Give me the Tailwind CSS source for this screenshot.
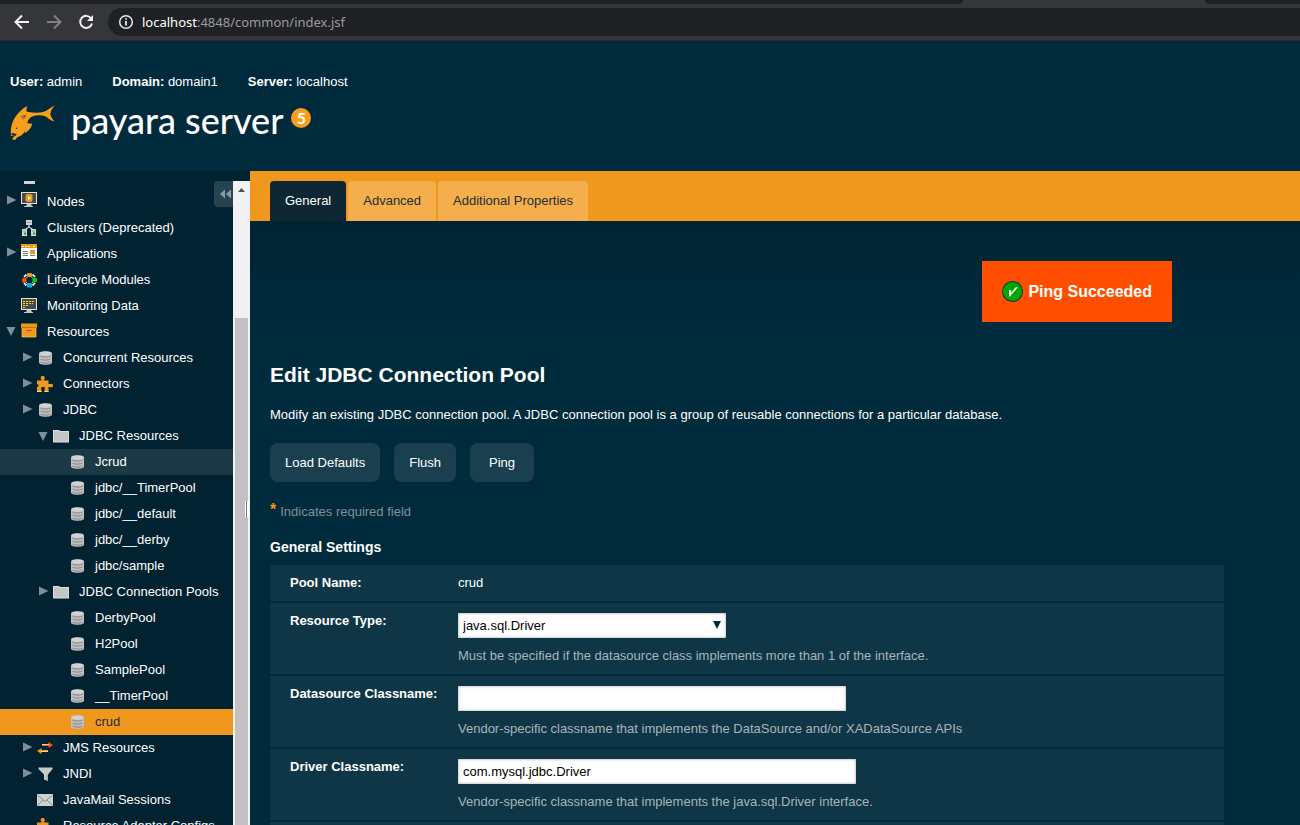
<!DOCTYPE html>
<html lang="en">
<head>
<meta charset="utf-8">
<title>Edit JDBC Connection Pool</title>
<script src="https://cdn.jsdelivr.net/npm/@tailwindcss/browser@4"></script>
</head>
<body class="flex h-screen flex-col overflow-hidden bg-[#002b3c] font-['Liberation_Sans',Arial,sans-serif] text-[13px] leading-5 text-white">

<!-- Icon library -->
<svg class="hidden" aria-hidden="true">
  <symbol id="right" viewBox="0 0 16 16"><path d="M2 3.500 11.500 8 2 12.500z" fill="#7e8f97"/></symbol>
  <symbol id="down" viewBox="0 0 16 16"><path d="M1.500 4h9L6 13z" fill="#7e8f97"/></symbol>
  <symbol id="db" viewBox="0 0 16 16">
    <path d="M2 3.500C2 .6 15 .6 15 3.500v9c0 3-13 3-13 0z" fill="#c0c0c0"/>
    <ellipse cx="8.500" cy="3.500" rx="6" ry="2" fill="#d2d2d2"/>
    <path d="M3.500 6c2 1.500 8 1.500 10 0M3.500 9c2 1.500 8 1.500 10 0M3.500 12c2 1.500 8 1.500 10 0" fill="none" stroke="#858585"/>
  </symbol>
  <symbol id="folder" viewBox="0 0 16 16">
    <path d="M0 2h6l1 1h9v11.500H0z" fill="#dedede"/><path d="M1 3h4.500l1 1H15v9.500H1z" fill="#c5c5c5"/>
  </symbol>
  <symbol id="nodes" viewBox="0 0 16 16">
    <path d="M0 0h16v12H0z" fill="#e2e2e2"/><path d="M1 1h14v10H1z" fill="#4a4a4a"/>
    <rect x="4.500" y="2" width="7" height="8" rx="2" fill="#f0981d"/><path d="M7 4l3 2-3 2z" fill="#fff"/>
    <path d="M6 12h4l1 2h1v1H3v-1h2z" fill="#c6c6c6"/>
  </symbol>
  <symbol id="clusters" viewBox="0 0 16 16">
    <path d="M8 5v2L4 9.500M8 7l4 2.500" stroke="#fff" fill="none"/>
    <path d="M5 0h6v5H5zM1 9h5v7H1zM10 9h5v7h-5z" fill="#d3d3d3"/>
    <path d="M6 2.500h4M2 11h3M11 11h3" stroke="#999"/><path d="M3 12.500h2v2H3zM12 12.500h2v2h-2z" fill="#18a52b"/>
  </symbol>
  <symbol id="apps" viewBox="0 0 16 16">
    <path d="M0 0h16v15H0z" fill="#fff"/><path d="M0 0h16v4H0z" fill="#f0981d"/>
    <path d="M1 2.500h2M4 2.500h2M7 2.500h2M12 2.500h2" stroke="#fff"/>
    <path d="M9 6h5v4H9z" fill="#f0981d"/><path d="M2 7.500h5M2 9.500h5M2 11.500h5M9 11.500h5" stroke="#777"/>
  </symbol>
  <symbol id="life" viewBox="0 0 16 16">
    <path d="M5.500 2.500 3 5M11.500 2.500 14 5M3 11l2.500 2.500M14 11l-2.500 2.500" stroke="#e0e0e0" stroke-width="1.800" fill="none"/>
    <path d="M6.500 5 5 6.500M10.500 5 12 6.500M5 10l1.500 1.500M12 10l-1.500 1.500" stroke="#c8c8c8" fill="none"/>
    <rect x="6" y="1" width="5" height="4" rx="1" fill="#f0981d"/><rect x="1" y="6" width="4.500" height="4.500" rx="1" fill="#ff4e00"/>
    <rect x="11.500" y="6" width="4.500" height="4.500" rx="1" fill="#00d000"/><rect x="6" y="11" width="5" height="4.500" rx="1" fill="#00aeef"/>
  </symbol>
  <symbol id="monitor" viewBox="0 0 16 16">
    <path d="M0 0h16v12H0z" fill="#e2e2e2"/><path d="M1 1h14v10H1z" fill="#4a4a4a"/>
    <path d="M2 3.500h11M2 5.500h10M2 7.500h6M2 9.500h3" stroke="#ffd800" stroke-dasharray="2 1"/>
    <path d="M6 12h4l1 2h1v1H3v-1h2z" fill="#c6c6c6"/>
  </symbol>
  <symbol id="box" viewBox="0 0 16 16">
    <path d="M1 4.500h14V14H1z" fill="#f0981d" stroke="#ffc470" stroke-width=".7"/><path d="M0 .500h16v4H0z" fill="#f0981d"/>
    <path d="M0 4.500h16" stroke="#b87312"/><path d="M5.500 7.500h5" stroke="#9b5e0a"/>
  </symbol>
  <symbol id="puzzle" viewBox="0 0 16 16">
    <path d="M0 4.500h4.500V3.400a2 2 0 1 1 2.500 0v1.100h4.500V8h1.700a1.800 1.800 0 1 1 0 3h-1.700v5H7.500v-2.500a1.800 1.800 0 1 0-3 0V16H0v-5.500h1.500v-2H0z" fill="#f0981d"/>
    <path d="M0 15.500h4.500M7.500 15.500h4" stroke="#ffd9a0"/>
  </symbol>
  <symbol id="jms" viewBox="0 0 16 16">
    <path d="M5 4h6.500V2L16 5l-4.500 3V6H5z" fill="#ff5a1c"/><path d="M5 4.500h7" stroke="#ffd2bf"/>
    <path d="M11 10H4.500V8L0 11l4.500 3v-2H11z" fill="#f0981d"/><path d="M4 11.500h7" stroke="#ffe1b3"/>
  </symbol>
  <symbol id="funnel" viewBox="0 0 16 16"><path d="M1.500 1.500h14V3L11 8.500V15l-4-1.500v-5L1.500 3z" fill="#c9c9c9"/><path d="M10 8.500V14" stroke="#999"/></symbol>
  <symbol id="mail" viewBox="0 0 16 16">
    <path d="M0 2h16v12H0z" fill="#d0d0d0"/><path d="M.5 3 8 9.500 15.500 3M.5 13.500 6 8M15.500 13.500 10 8" fill="none" stroke="#8b8b8b"/>
  </symbol>
</svg>

<!-- Browser toolbar -->
<div class="shrink-0 border-b border-[#292a2d] bg-[#35363a]">
  <div class="flex h-1 justify-between">
    <div class="w-[963px] rounded-br-md bg-[#202124]"></div>
    <div class="w-[95px] rounded-bl-md bg-[#202124]"></div>
  </div>
  <div class="flex h-9 items-center pl-3">
    <button class="mr-3 size-5" aria-label="Back"><svg viewBox="0 0 20 20" fill="none" stroke="#f1f1f1" stroke-width="2"><path d="M17 10H4M10 3.500 3.500 10l6.500 6.500"/></svg></button>
    <button class="mr-3 size-5" aria-label="Forward"><svg viewBox="0 0 20 20" fill="none" stroke="#808184" stroke-width="2"><path d="M3 10h13M10 3.500l6.500 6.500-6.500 6.500"/></svg></button>
    <button class="mr-3 size-5" aria-label="Reload"><svg viewBox="0 0 20 20" fill="none" stroke="#f1f1f1" stroke-width="2"><path d="M15.200 6.500A6 6 0 1 0 16 11.500"/><path d="M17 3v6h-6z" fill="#f1f1f1" stroke="none"/></svg></button>
    <div class="flex h-7 flex-1 items-center gap-2 rounded-l-full bg-[#202124] pl-2.5">
      <svg class="size-4" viewBox="0 0 16 16" fill="none" stroke="#e8eaed"><circle cx="8" cy="8" r="6.300" stroke-width="1.500"/><path d="M8 7v4.500M8 4.200v1.600" stroke-width="1.800"/></svg>
      <div role="textbox" aria-label="Address" class="font-['Noto_Sans',sans-serif] text-[13px] text-[#9a9b9e]"><span class="text-white">localhost</span>:4848/common/index.jsf</div>
    </div>
  </div>
</div>

<!-- Console header -->
<header class="h-[130px] shrink-0 px-2.5 pt-[31px]">
  <div class="flex gap-[30px]">
    <span><b>User:</b> admin</span><span><b>Domain:</b> domain1</span><span><b>Server:</b> localhost</span>
  </div>
  <div class="mt-1 flex h-12 items-center">
    <svg class="mt-[9px] mr-4 h-[35px] w-[45px] self-start" viewBox="32 122 134 104" aria-hidden="true">
      <path d="M35 214C31 186 42 148 84 124 81 131 80 137 82 142 105 146 128 146 140 139L165 123C157 133 153 141 152 149 154 157 158 164 164 171 154 169 147 163 140 157 122 150 101 152 92 160 86 166 84 170 84 176L98 178C96 190 89 199 76 206L77 196C74 208 64 214 54 218L47 226 38 224 46 213z" fill="#f99d1c"/>
      <path d="m36 205 16 3-4 6-11-3z" fill="#002b3c"/><circle cx="52" cy="191" r="2" fill="#002b3c"/>
      <path d="M64 157l16-5M67 161l12-7M71 165l8-9" stroke="#002b3c" stroke-width="1.500" fill="none"/>
    </svg>
    <span class="font-[Lato,sans-serif] text-4xl leading-10 font-medium">payara server</span>
    <span class="mb-1 ml-2 flex size-5 items-center justify-center rounded-full bg-[#f99d1c] font-[Lato,sans-serif] text-base font-bold">5</span>
  </div>
</header>

<div class="flex min-h-0 flex-1">
  <!-- Navigation tree -->
  <aside class="relative w-[250px] shrink-0 bg-[#002231] pt-2.5">
    <div class="flex h-full">
      <nav class="min-w-0 flex-1 overflow-hidden whitespace-nowrap" aria-label="Tree">
        <div class="-mt-[18px] flex h-[26px] items-end pb-[5px] pl-6"><span class="h-[3px] w-[11px] bg-[#d3d3d3]"></span></div>
        <a href="#" class="flex h-[26px] items-center pl-[5px]"><svg class="mb-1 size-4"><use href="#right"/></svg><svg class="mr-2.5 mb-1 size-4"><use href="#nodes"/></svg>Nodes</a>
        <a href="#" class="flex h-[26px] items-center pl-[21px]"><svg class="mr-2.5 size-4"><use href="#clusters"/></svg>Clusters (Deprecated)</a>
        <a href="#" class="flex h-[26px] items-center pl-[5px]"><svg class="mb-1 size-4"><use href="#right"/></svg><svg class="mr-2.5 mb-1 size-4"><use href="#apps"/></svg>Applications</a>
        <a href="#" class="flex h-[26px] items-center pl-[21px]"><svg class="mr-2.5 size-4"><use href="#life"/></svg>Lifecycle Modules</a>
        <a href="#" class="flex h-[26px] items-center pl-[21px]"><svg class="mr-2.5 size-4"><use href="#monitor"/></svg>Monitoring Data</a>
        <a href="#" class="flex h-[26px] items-center pl-[5px]"><svg class="mb-0.5 size-4"><use href="#down"/></svg><svg class="mr-2.5 mb-0.5 size-4"><use href="#box"/></svg>Resources</a>
        <a href="#" class="flex h-[26px] items-center pl-[21px]"><svg class="mb-0.5 size-4"><use href="#right"/></svg><svg class="mr-2.5 size-4"><use href="#db"/></svg>Concurrent Resources</a>
        <a href="#" class="flex h-[26px] items-center pl-[21px]"><svg class="mb-0.5 size-4"><use href="#right"/></svg><svg class="mr-2.5 size-4"><use href="#puzzle"/></svg>Connectors</a>
        <a href="#" class="flex h-[26px] items-center pl-[21px]"><svg class="mb-0.5 size-4"><use href="#right"/></svg><svg class="mr-2.5 size-4"><use href="#db"/></svg>JDBC</a>
        <a href="#" class="flex h-[26px] items-center pl-[37px]"><svg class="size-4"><use href="#down"/></svg><svg class="mr-2.5 size-4"><use href="#folder"/></svg>JDBC Resources</a>
        <a href="#" class="flex h-[26px] items-center bg-[#1c3946] pl-[69px]"><svg class="mr-2.5 size-4"><use href="#db"/></svg>Jcrud</a>
        <a href="#" class="flex h-[26px] items-center pl-[69px]"><svg class="mr-2.5 size-4"><use href="#db"/></svg>jdbc/__TimerPool</a>
        <a href="#" class="flex h-[26px] items-center pl-[69px]"><svg class="mr-2.5 size-4"><use href="#db"/></svg>jdbc/__default</a>
        <a href="#" class="flex h-[26px] items-center pl-[69px]"><svg class="mr-2.5 size-4"><use href="#db"/></svg>jdbc/__derby</a>
        <a href="#" class="flex h-[26px] items-center pl-[69px]"><svg class="mr-2.5 size-4"><use href="#db"/></svg>jdbc/sample</a>
        <a href="#" class="flex h-[26px] items-center pl-[37px]"><svg class="mb-0.5 size-4"><use href="#right"/></svg><svg class="mr-2.5 size-4"><use href="#folder"/></svg>JDBC Connection Pools</a>
        <a href="#" class="flex h-[26px] items-center pl-[69px]"><svg class="mr-2.5 size-4"><use href="#db"/></svg>DerbyPool</a>
        <a href="#" class="flex h-[26px] items-center pl-[69px]"><svg class="mr-2.5 size-4"><use href="#db"/></svg>H2Pool</a>
        <a href="#" class="flex h-[26px] items-center pl-[69px]"><svg class="mr-2.5 size-4"><use href="#db"/></svg>SamplePool</a>
        <a href="#" class="flex h-[26px] items-center pl-[69px]"><svg class="mr-2.5 size-4"><use href="#db"/></svg>__TimerPool</a>
        <a href="#" class="flex h-[26px] items-center bg-[#f0981d] pl-[69px] text-[#1c2e36]" aria-current="page"><svg class="mr-2.5 size-4"><use href="#db"/></svg>crud</a>
        <a href="#" class="flex h-[26px] items-center pl-[21px]"><svg class="mb-0.5 size-4"><use href="#right"/></svg><svg class="mr-2.5 size-4"><use href="#jms"/></svg>JMS Resources</a>
        <a href="#" class="flex h-[26px] items-center pl-[21px]"><svg class="mb-0.5 size-4"><use href="#right"/></svg><svg class="mr-2.5 size-4"><use href="#funnel"/></svg>JNDI</a>
        <a href="#" class="flex h-[26px] items-center pl-[37px]"><svg class="mr-2.5 size-4"><use href="#mail"/></svg>JavaMail Sessions</a>
        <a href="#" class="flex h-[26px] items-center pl-[37px]"><svg class="mr-2.5 size-4"><use href="#puzzle"/></svg>Resource Adapter Configs</a>
      </nav>
      <div class="flex w-[17px] flex-col items-center bg-[#f1f1f1]" aria-hidden="true">
        <svg class="h-[17px] w-[17px] shrink-0" viewBox="0 0 17 17"><path d="M5 11h7L8.500 7z" fill="#505050"/></svg>
        <div class="mt-[120px] w-[13px] flex-1 bg-[#c1c1c1]"></div>
      </div>
    </div>
    <button class="absolute top-2.5 right-[17px] flex h-[26px] w-[19px] items-center justify-end rounded-l-sm bg-[#264350]" aria-label="Collapse">
      <svg class="mr-0.5 size-3" viewBox="0 0 12 12" fill="#8c9ca4"><path d="M6 1.500v9L1 6zM12 1.500v9L7 6z"/></svg>
    </button>
    <div class="absolute top-[330px] right-px flex h-4 w-1 justify-between bg-white px-px" aria-hidden="true"><i class="w-px bg-[#777]"></i></div>
  </aside>

  <!-- Content -->
  <main class="flex min-w-0 flex-1 flex-col">
    <nav class="flex h-[50px] shrink-0 items-end gap-0.5 bg-[#f0981d] pl-5 text-[#1c2e36]" aria-label="Tabs">
      <a href="#" class="flex h-10 items-center rounded-t-sm bg-[#0f2733] px-[15px] text-white" aria-current="page">General</a>
      <a href="#" class="flex h-10 items-center rounded-t-sm bg-[#f4ae4b] px-[15px]">Advanced</a>
      <a href="#" class="flex h-10 items-center rounded-t-sm bg-[#f4ae4b] px-[15px]">Additional Properties</a>
    </nav>
    <div class="flex flex-1 flex-col overflow-hidden bg-[linear-gradient(#002433,#002b3c_110px)] pt-10 pr-[76px] pl-5">
      <div role="status" class="mr-[52px] flex shrink-0 items-center gap-[5px] self-end bg-[#ff4e00] p-5 text-base leading-[21px] font-bold">
        <svg class="size-[21px]" viewBox="0 0 21 21"><circle cx="10.500" cy="10.500" r="10.500" fill="#00372c"/><circle cx="10.500" cy="10.500" r="9.600" fill="#00a500"/><path d="M7 9h2v3l5-6h2l-8 9.500H7z" fill="#fff"/></svg>
        Ping Succeeded
      </div>
      <h1 class="mt-10 text-[21px] leading-[26px] font-bold">Edit JDBC Connection Pool</h1>
      <p class="mt-[17px]">Modify an existing JDBC connection pool. A JDBC connection pool is a group of reusable connections for a particular database.</p>
      <div class="mt-[18px] flex shrink-0 gap-3.5">
        <button class="h-[39px] rounded-lg bg-[#1a4050] px-[15px]">Load Defaults</button>
        <button class="h-[39px] rounded-lg bg-[#1a4050] px-[15px]">Flush</button>
        <button class="h-[39px] min-w-16 rounded-lg bg-[#1a4050] px-[15px]">Ping</button>
      </div>
      <p class="mt-5 flex gap-1 text-[#808f96]"><span class="text-base leading-4 font-bold text-[#f0981d]">*</span>Indicates required field</p>
      <h2 class="mt-[15px] mb-2 text-sm leading-5 font-bold">General Settings</h2>
      <div class="flex flex-col gap-0.5">
        <div class="flex shrink-0 bg-[#0e3647] py-2 pl-5">
          <b class="w-[168px] shrink-0">Pool Name:</b><span>crud</span>
        </div>
        <div class="flex shrink-0 bg-[#0e3647] pb-2 pl-5">
          <label for="type" class="w-[168px] shrink-0 pt-2 font-bold">Resource Type:</label>
          <div class="pt-2.5">
            <div class="relative w-[268px]">
              <select id="type" class="block h-[25px] w-full appearance-none bg-white pl-[5px] text-black shadow-[inset_0_0_3px_#999]"><option>java.sql.Driver</option></select>
              <svg class="pointer-events-none absolute top-2 right-[5px] h-2 w-2" viewBox="0 0 8 8" aria-hidden="true"><path d="M0 0h8L4 8z" fill="#002b3c"/></svg>
            </div>
            <p class="mt-2 text-[#a7b5bb]">Must be specified if the datasource class implements more than 1 of the interface.</p>
          </div>
        </div>
        <div class="flex shrink-0 bg-[#0e3647] pb-2 pl-5">
          <label for="ds" class="w-[168px] shrink-0 pt-2 font-bold">Datasource Classname:</label>
          <div class="pt-2.5">
            <input id="ds" type="text" class="block h-[25px] w-[388px] bg-white px-[5px] text-black shadow-[inset_0_0_3px_#999]">
            <p class="mt-2 text-[#a7b5bb]">Vendor-specific classname that implements the DataSource and/or XADataSource APIs</p>
          </div>
        </div>
        <div class="flex shrink-0 bg-[#0e3647] pb-2 pl-5">
          <label for="driver" class="w-[168px] shrink-0 pt-2 font-bold">Driver Classname:</label>
          <div class="pt-2.5">
            <input id="driver" type="text" value="com.mysql.jdbc.Driver" class="block h-[25px] w-[398px] bg-white px-[5px] text-black shadow-[inset_0_0_3px_#999]">
            <p class="mt-2 text-[#a7b5bb]">Vendor-specific classname that implements the java.sql.Driver interface.</p>
          </div>
        </div>
        <div class="h-9 shrink-0 bg-[#0e3647]"></div>
      </div>
    </div>
  </main>
</div>
</body>
</html>
